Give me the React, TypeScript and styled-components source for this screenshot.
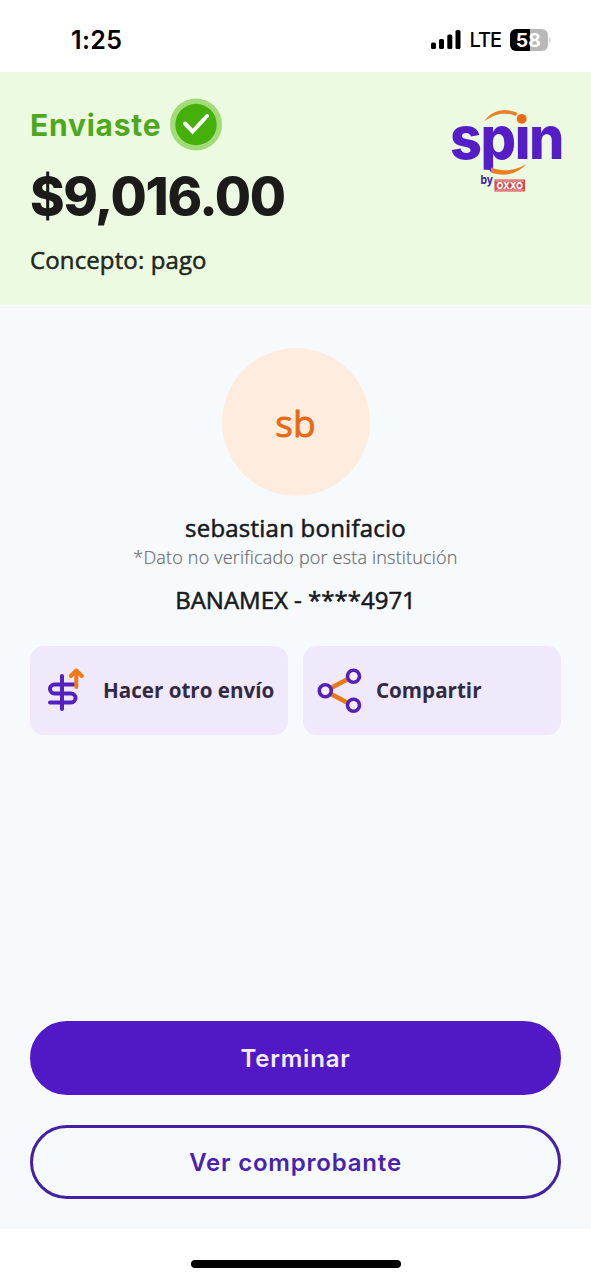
import React from "react";
import styled, { createGlobalStyle } from "styled-components";

const GlobalStyle = createGlobalStyle`
  * { box-sizing: border-box; }
  body { margin: 0; background: #fff; }
  button { font: inherit; cursor: pointer; }
`;

const display = `Inter, "Liberation Sans", sans-serif`;
const body = `"Open Sans", "Noto Sans", sans-serif`;

const Screen = styled.div`
  display: flex;
  flex-direction: column;
  width: 591px;
  height: 1280px;
  background: #fff;
  font-family: ${body};
  color: #1a1d20;
`;

const StatusBar = styled.div`
  display: flex;
  align-items: center;
  justify-content: space-between;
  height: 72px;
  padding: 8px 39px 0 71px;
  font-family: ${display};
  color: #000;
`;

const Clock = styled.span`
  font-size: 25px;
  font-weight: 600;
  letter-spacing: 0.4px;
  line-height: 30px;
`;

const Indicators = styled.div`
  display: flex;
  align-items: center;
`;

const Carrier = styled.span`
  margin: 0 9px 0 8px;
  font-size: 20px;
  font-weight: 500;
  letter-spacing: -1px;
  line-height: 24px;
`;

const Summary = styled.header`
  display: flex;
  justify-content: space-between;
  height: 233px;
  padding: 26px 20px 0 30px;
  background: #ebfae1;
`;

const SummaryText = styled.div`
  display: flex;
  flex-direction: column;
`;

const SentRow = styled.div`
  display: flex;
  align-items: center;
  gap: 8px;
  height: 53px;
`;

const Sent = styled.span`
  width: 132px;
  font-family: ${display};
  font-size: 30px;
  font-weight: 700;
  letter-spacing: 0.75px;
  color: #4fa81c;
`;

const Amount = styled.strong`
  margin-top: 13px;
  font-family: ${display};
  font-size: 52.5px;
  font-weight: 800;
  letter-spacing: -1.35px;
  line-height: 64px;
  color: #1b1c19;
`;

const Concept = styled.span`
  margin-top: 16px;
  font-size: 24px;
  letter-spacing: 0.12px;
  line-height: 32px;
  color: #20261c;
  -webkit-text-stroke: 0.5px;
`;

const Content = styled.main`
  display: flex;
  flex-direction: column;
  align-items: center;
  height: 924px;
  padding: 43px 30px 30px;
  background: #f7fafd;
`;

const Avatar = styled.div`
  display: flex;
  align-items: center;
  justify-content: center;
  width: 148px;
  height: 148px;
  border-radius: 50%;
  background: #feeddf;
  color: #e8690f;
  font-size: 37px;
  -webkit-text-stroke: 0.8px;
`;

const Line = styled.span<{ $top: number; $spacing?: number }>`
  margin-top: ${(p) => p.$top}px;
  font-size: 24px;
  letter-spacing: ${(p) => p.$spacing ?? 0}px;
  line-height: 32px;
  color: #17191c;
  white-space: nowrap;
  -webkit-text-stroke: 0.55px;
`;

const Note = styled.span`
  margin-top: 1px;
  font-size: 18px;
  font-weight: 300;
  letter-spacing: 0.18px;
  line-height: 24px;
  color: #686b70;
  -webkit-text-stroke: 0.2px;
  white-space: nowrap;
`;

const Actions = styled.div`
  display: grid;
  grid-template-columns: 1fr 1fr;
  gap: 15px;
  width: 100%;
  margin-top: 30px;
`;

const Action = styled.button`
  display: flex;
  align-items: center;
  gap: 12px;
  height: 89px;
  padding: 0 0 0 13px;
  border: 0;
  border-radius: 14px;
  background: #f0e8fb;
  color: #322a42;
  font-size: 20.6px;
  font-weight: 700;
  white-space: nowrap;
`;

const ActionLabel = styled.span`
  padding-bottom: 2px;
`;

const Footer = styled.div`
  display: flex;
  flex-direction: column;
  gap: 30px;
  width: 100%;
  margin-top: auto;
`;

const Pill = styled.button<{ $outline?: boolean }>`
  height: 74px;
  border: 3px solid ${(p) => (p.$outline ? "#4320a4" : "#5119c6")};
  border-radius: 37px;
  background: ${(p) => (p.$outline ? "transparent" : "#5119c6")};
  color: ${(p) => (p.$outline ? "#4a22b0" : "#f6ecff")};
  font-family: ${display};
  font-size: 24px;
  font-weight: 600;
  letter-spacing: 0.8px;
`;

const HomeArea = styled.div`
  display: flex;
  justify-content: center;
  flex: 1;
  padding-top: 31px;
`;

const HomeBar = styled.div`
  width: 210px;
  height: 8px;
  border-radius: 4px;
  background: #000;
`;

const Signal = () => (
  <svg width="30" height="20" viewBox="0 0 30 20">
    <rect x="0" y="12.5" width="5" height="6.5" rx="1.6" />
    <rect x="8" y="9" width="5" height="10" rx="1.6" />
    <rect x="16.300" y="4.500" width="5" height="14.500" rx="1.6" />
    <rect x="24.500" y="0" width="5" height="19" rx="1.6" />
  </svg>
);

const Battery = () => (
  <svg width="42" height="22" viewBox="0 0 42 22">
    <path d="M20 0H32a6 6 0 0 1 6 6V16a6 6 0 0 1-6 6H20Z" fill="#b8b8b8" />
    <path d="M20 0H6A6 6 0 0 0 0 6V16a6 6 0 0 0 6 6H20Z" fill="#000" />
    <path d="M39.500 7.500q2 3.500 0 7Z" fill="#b8b8b8" />
    <text x="18.300" y="18" textAnchor="middle" fill="#fff" fontFamily={display} fontSize="19" fontWeight="700" textLength="25" lengthAdjust="spacingAndGlyphs">58</text>
  </svg>
);

const CheckBadge = () => (
  <svg width="52" height="53" viewBox="0 0 52 53">
    <circle cx="26" cy="26.500" r="26" fill="#a1dc77" />
    <circle cx="26" cy="26.500" r="20.700" fill="#46b00b" />
    <path d="m15 25.500 7.600 8 14.400-15.500" fill="none" stroke="#fff" strokeWidth="4" strokeLinecap="round" strokeLinejoin="miter" />
  </svg>
);

const SpinLogo = () => (
  <svg width="130" height="105" viewBox="0 0 130 105">
    <defs>
      <clipPath id="lower"><path d="M0 26.500H130V105H52L49 72 0 69Z" /></clipPath>
    </defs>
    <text clipPath="url(#lower)" y="60.500" x="9" textLength="113" lengthAdjust="spacingAndGlyphs" fill="#541dc6" fontFamily={display} fontSize="59" fontWeight="800" letterSpacing="-1.5">spin</text>
    <path d="M43 23.500C52 11 65 9.500 76.500 15L75 18C64 13.500 54 15.500 43 23.500Z" fill="#e88125" />
    <circle cx="80.700" cy="20.800" r="4.900" fill="#ee6a14" />
    <path d="M50 69.500C62 74 74 73 85.500 66C75 77.500 62 78.500 50 74.500Z" fill="#e88125" />
    <text x="39.500" y="86" fill="#4220a3" fontFamily={display} fontSize="12" fontWeight="700" textLength="12.500" lengthAdjust="spacingAndGlyphs">by</text>
    <rect x="53.500" y="81.500" width="30.500" height="12" fill="#d9434a" />
    <path d="M54.500 83H83M54.500 92H83" stroke="#fbd9cf" strokeWidth=".8" />
    <text x="55.500" y="90.800" fill="#fff" fontFamily={display} fontSize="9.500" fontWeight="800" textLength="26.500" lengthAdjust="spacingAndGlyphs">OXXO</text>
  </svg>
);

const SendIcon = () => (
  <svg width="48" height="48" viewBox="0 0 48 48" fill="none" strokeLinecap="round" strokeWidth="4">
    <path d="M19 9V42M32 17.500H11.500a4.500 4.500 0 0 0 0 9H28a4.500 4.500 0 0 1 0 9H7" stroke="#5321c0" />
    <path d="M33.300 20V4M27.800 9l5.500-5.500L38.800 9" stroke="#f27a13" strokeLinejoin="round" />
  </svg>
);

const ShareIcon = () => (
  <svg width="48" height="48" viewBox="0 0 48 48" fill="none">
    <path d="M15 21 31 12.500M15 27l16 8.500" stroke="#ea7915" strokeWidth="4.800" />
    <g stroke="#5321b6" strokeWidth="3.600" fill="#f5effc">
      <circle cx="9.300" cy="23.800" r="6" />
      <circle cx="37.500" cy="9.300" r="6" />
      <circle cx="37.500" cy="38.300" r="6" />
    </g>
  </svg>
);

export default function App() {
  return (
    <Screen>
      <GlobalStyle />
      <StatusBar>
        <Clock>1:25</Clock>
        <Indicators>
          <Signal />
          <Carrier>LTE</Carrier>
          <Battery />
        </Indicators>
      </StatusBar>
      <Summary>
        <SummaryText>
          <SentRow>
            <Sent>Enviaste</Sent>
            <CheckBadge />
          </SentRow>
          <Amount>$9,016.00</Amount>
          <Concept>Concepto: pago</Concept>
        </SummaryText>
        <SpinLogo />
      </Summary>
      <Content>
        <Avatar>sb</Avatar>
        <Line $top={16} $spacing={0.23}>sebastian bonifacio</Line>
        <Note>*Dato no verificado por esta institución</Note>
        <Line $top={15}>BANAMEX - ****4971</Line>
        <Actions>
          <Action><SendIcon /><ActionLabel>Hacer otro envío</ActionLabel></Action>
          <Action><ShareIcon /><ActionLabel>Compartir</ActionLabel></Action>
        </Actions>
        <Footer>
          <Pill>Terminar</Pill>
          <Pill $outline>Ver comprobante</Pill>
        </Footer>
      </Content>
      <HomeArea><HomeBar /></HomeArea>
    </Screen>
  );
}
